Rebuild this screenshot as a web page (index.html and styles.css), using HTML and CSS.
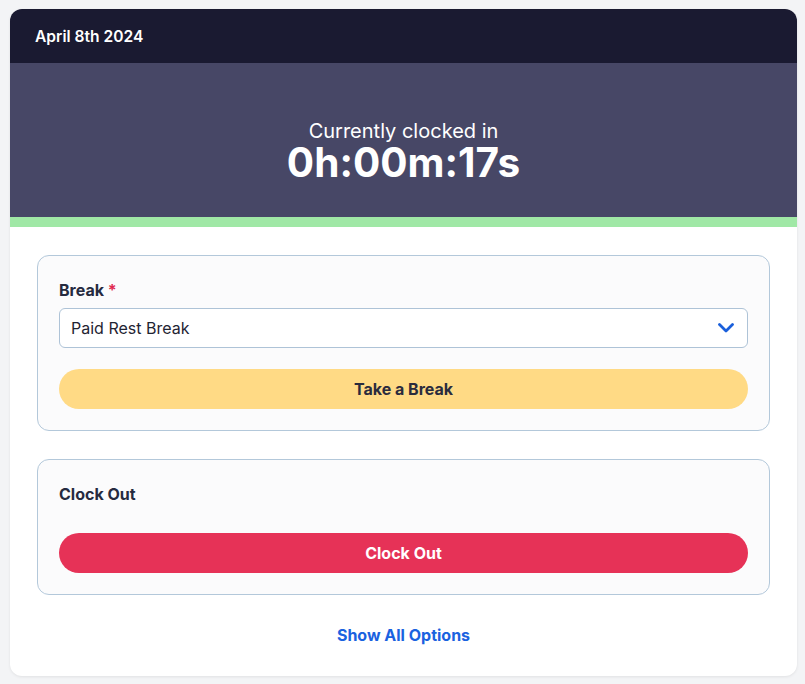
FILE: index.html
```html
<!DOCTYPE html>
<html>
<head>
<meta charset="utf-8">
<link rel="stylesheet" href="styles.css">
</head>
<body>
<div class="card">
  <div class="card-header">April 8th 2024</div>
  <div class="hero">
    <div class="hero-sub">Currently clocked in</div>
    <div class="hero-time">0h:00m:17s</div>
  </div>
  <div class="strip"></div>
  <div class="card-body">
    <div class="panel">
      <div class="label">Break <span class="req">*</span></div>
      <div class="select">
        <span>Paid Rest Break</span>
        <svg class="chev" width="16" height="10" viewBox="0 0 16 10"><path d="M1.5 1.5 L8 8 L14.5 1.5" fill="none" stroke="#1a5fdb" stroke-width="2.8" stroke-linecap="round" stroke-linejoin="round"/></svg>
      </div>
      <button class="btn btn-yellow">Take a Break</button>
    </div>
    <div class="panel">
      <div class="label">Clock Out</div>
      <button class="btn btn-red btn-gap">Clock Out</button>
    </div>
    <div class="link">Show All Options</div>
  </div>
</div>
</body>
</html>
```

FILE: styles.css
```css
* { box-sizing: border-box; }
html, body { margin: 0; padding: 0; }
body {
  background: #f3f4f6;
  font-family: Inter, "Noto Sans", sans-serif;
  padding: 9px 8px 8px 10px;
  width: 805px;
  height: 684px;
}
.card {
  background: #ffffff;
  border-radius: 12px;
  overflow: hidden;
  box-shadow: 0 1px 3px rgba(0,0,0,0.08);
}
.card-header {
  background: #1a1a31;
  color: #ffffff;
  height: 54px;
  padding-left: 25px;
  display: flex;
  align-items: center;
  font-size: 15.6px;
  font-weight: 600;
}
.hero {
  background: #474766;
  height: 154px;
  color: #ffffff;
  display: flex;
  flex-direction: column;
  align-items: center;
  padding-top: 57px;
}
.hero-sub {
  font-size: 20px;
  line-height: 22px;
  font-weight: 400;
}
.hero-time {
  font-size: 40.5px;
  line-height: 42px;
  font-weight: 700;
  margin-top: 0;
}
.strip {
  height: 10px;
  background: #a0e8a6;
}
.card-body {
  padding: 28px 27px 29px 27px;
  display: flex;
  flex-direction: column;
  gap: 28px;
}
.panel {
  background: #fbfbfc;
  border: 1px solid #b3c8da;
  border-radius: 12px;
  padding: 22px 21px 21px 21px;
  display: flex;
  flex-direction: column;
}
.label {
  font-size: 16px;
  line-height: 24px;
  font-weight: 700;
  color: #252a3f;
}
.req { color: #e0294f; }
.select {
  margin-top: 6px;
  height: 40px;
  background: #ffffff;
  border: 1px solid #aec3d7;
  border-radius: 6px;
  display: flex;
  align-items: center;
  justify-content: space-between;
  padding: 0 13px 0 11px;
  font-size: 16px;
  color: #1f2433;
}
.chev { display: block; }
.btn {
  height: 40px;
  border: none;
  border-radius: 20px;
  font-family: inherit;
  font-size: 16px;
  font-weight: 700;
  margin-top: 21px;
  width: 100%;
}
.btn-yellow { background: #ffda85; color: #2a2b3d; }
.btn-red { background: #e63257; color: #ffffff; }
.btn-gap { margin-top: 27px; }
.link {
  text-align: center;
  font-size: 16px;
  line-height: 24px;
  font-weight: 700;
  color: #1a62e0;
}
```
